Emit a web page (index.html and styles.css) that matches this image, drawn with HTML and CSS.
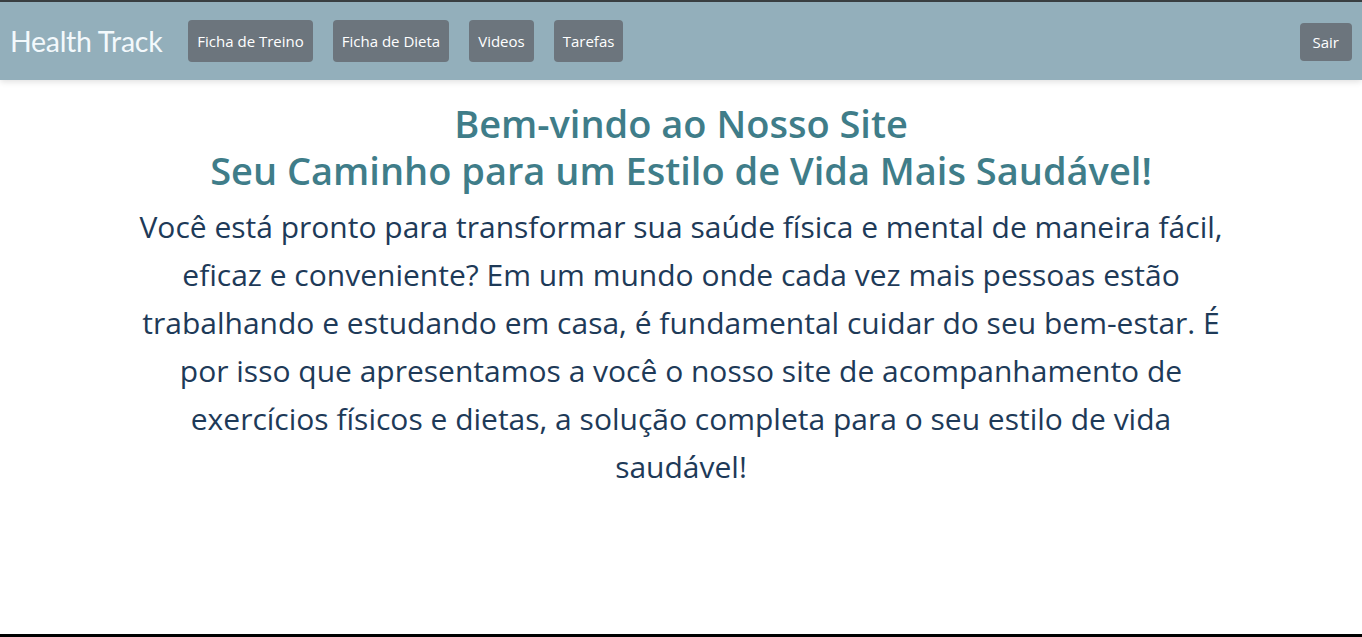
FILE: index.html
```html
<!DOCTYPE html>
<html lang="pt-BR">
<head>
<meta charset="utf-8">
<title>Health Track</title>
<link rel="stylesheet" href="styles.css">
</head>
<body>
<div class="frame">
  <nav class="navbar">
    <a class="brand" href="#">Health Track</a>
    <div class="nav-links">
      <a class="btn" href="#">Ficha de Treino</a>
      <a class="btn" href="#">Ficha de Dieta</a>
      <a class="btn" href="#">Videos</a>
      <a class="btn" href="#">Tarefas</a>
    </div>
    <a class="btn btn-exit" href="#">Sair</a>
  </nav>
  <main class="content">
    <h1 class="title">Bem-vindo ao Nosso Site<br>Seu Caminho para um Estilo de Vida Mais Saudável!</h1>
    <p class="intro">Você está pronto para transformar sua saúde física e mental de maneira fácil, eficaz e conveniente? Em um mundo onde cada vez mais pessoas estão trabalhando e estudando em casa, é fundamental cuidar do seu bem-estar. É por isso que apresentamos a você o nosso site de acompanhamento de exercícios físicos e dietas, a solução completa para o seu estilo de vida saudável!</p>
  </main>
</div>
</body>
</html>
```
FILE: styles.css
```css
* { box-sizing: border-box; }
html, body { margin: 0; padding: 0; height: 100%; }
body {
  font-family: "Open Sans", "Noto Sans", sans-serif;
  background: #ffffff;
  overflow: hidden;
}
.frame {
  height: 637px;
  border-top: 2px solid #3b4043;
  border-bottom: 3px solid #000;
  display: flex;
  flex-direction: column;
}
.navbar {
  height: 78px;
  background: #93afbb;
  display: flex;
  align-items: center;
  padding: 0 10px;
  box-shadow: 0 2px 6px rgba(0,0,0,0.12);
  position: relative;
  z-index: 1;
}
.brand {
  font-family: "Lato", sans-serif;
  font-size: 28.5px;
  color: #f3f9fc;
  text-decoration: none;
  letter-spacing: -0.3px;
  margin-right: 26px;
}
.nav-links {
  display: flex;
  gap: 20px;
  flex: 1;
}
.btn {
  display: inline-flex;
  align-items: center;
  height: 42px;
  padding: 0 9px;
  background: #6c757d;
  color: #fff;
  font-size: 15px;
  text-decoration: none;
  border-radius: 4px;
}
.btn-exit {
  height: 38px;
  margin-top: 2px;
  padding: 0 13px;
}
.content {
  flex: 1;
  width: 1116px;
  margin: 0 auto;
  text-align: center;
  padding-top: 20px;
}
.title {
  margin: 0 0 9px;
  font-size: 38px;
  line-height: 47px;
  font-weight: 600;
  color: #3f7d89;
}
.intro {
  margin: 0;
  font-size: 30px;
  line-height: 48px;
  color: #1e3a58;
}
```
